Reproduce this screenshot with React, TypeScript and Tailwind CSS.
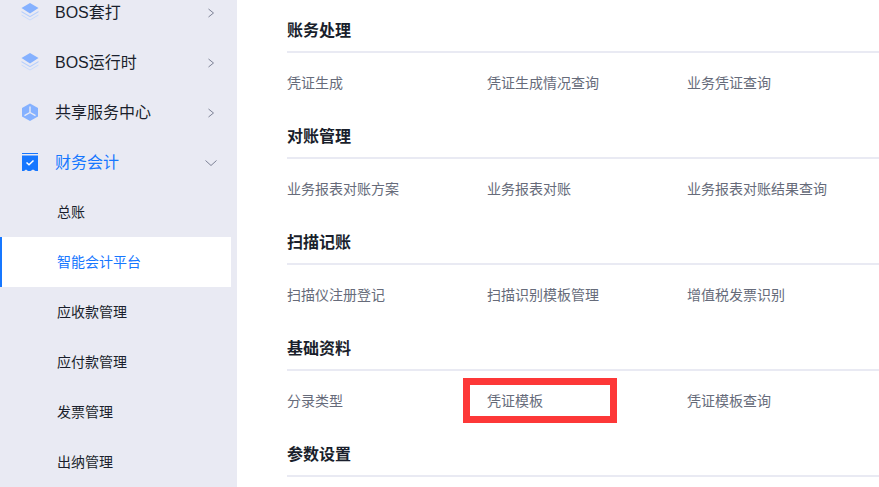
import React from 'react';

const sansStack = '"Liberation Sans", "Noto Sans CJK SC", sans-serif';

const LayersIcon = () => (
  <svg width="18" height="20" viewBox="0 0 18 20" className="shrink-0">
    <path d="M9 0 L17.5 5 L9 10.5 L0.5 5 Z" fill="#85b1ff" />
    <path d="M0.5 8 L9 13 L17.5 8 L17.5 9.2 L9 14.2 L0.5 9.2 Z" fill="#b5cffd" />
    <path d="M0.5 11.5 L9 16.5 L17.5 11.5 L17.5 12.5 L9 17.5 L0.5 12.5 Z" fill="#c8dbfc" />
  </svg>
);

const ShareIcon = () => (
  <svg width="18" height="20" viewBox="0 0 18 20" className="shrink-0">
    <path d="M9 0.5 L17 5 V13.5 L9 18 L1 13.5 V5 Z" fill="#85b1ff" />
    <path d="M9 3.5 V9.5 M9 9.5 L3.5 12.7 M9 9.5 L14.5 12.7" stroke="#e9eaf3" strokeWidth="1.4" fill="none" />
  </svg>
);

const LedgerIcon = () => (
  <svg width="18" height="20" viewBox="0 0 18 20" className="shrink-0">
    <rect x="1" y="0" width="16" height="1" fill="#1677ff" />
    <path d="M1 2.5 H17 V18 L14.5 18 L12 16.5 L9.5 18 L7 18 L5 16.5 L3 18 H1 Z" fill="#1677ff" />
    <path d="M5.5 9.5 L8 11.8 L12.5 7.5" stroke="#ffffff" strokeWidth="1.5" fill="none" />
  </svg>
);

const Chevron = ({ open }: { open?: boolean }) => (
  <svg width="12" height="12" viewBox="0 0 12 12" className="shrink-0">
    <path
      d={open ? 'M0.5 3.5 L6 8.5 L11.5 3.5' : 'M3.5 2 L8.5 6 L3.5 10'}
      stroke="#7d8296"
      strokeWidth="1"
      fill="none"
    />
  </svg>
);

const topMenus = [
  { label: 'BOS套打', icon: <LayersIcon /> },
  { label: 'BOS运行时', icon: <LayersIcon /> },
  { label: '共享服务中心', icon: <ShareIcon /> },
];

const subMenus = ['总账', '智能会计平台', '应收款管理', '应付款管理', '发票管理', '出纳管理'];

const sections = [
  { title: '账务处理', links: ['凭证生成', '凭证生成情况查询', '业务凭证查询'] },
  { title: '对账管理', links: ['业务报表对账方案', '业务报表对账', '业务报表对账结果查询'] },
  { title: '扫描记账', links: ['扫描仪注册登记', '扫描识别模板管理', '增值税发票识别'] },
  { title: '基础资料', links: ['分录类型', '凭证模板', '凭证模板查询'] },
  { title: '参数设置', links: [] as string[] },
];

export default function App() {
  return (
    <div
      className="relative flex h-[487px] w-[879px] overflow-hidden bg-white"
      style={{ fontFamily: sansStack }}
    >
      {/* Sidebar */}
      <aside className="h-full w-[237px] shrink-0 bg-[#e9eaf3]">
        <div className="-mt-[13px]">
          {topMenus.map((menu) => (
            <div key={menu.label} className="flex h-[50px] items-center pl-[21px] pr-[20px] pt-[2px]">
              {menu.icon}
              <span className="ml-[16px] flex-1 text-[16px] text-[#1a1f2c]">{menu.label}</span>
              <Chevron />
            </div>
          ))}
          <div className="flex h-[50px] items-center pl-[21px] pr-[20px] pt-[2px]">
            <LedgerIcon />
            <span className="ml-[16px] flex-1 text-[16px] text-[#1677ff]">财务会计</span>
            <Chevron open />
          </div>
          {subMenus.map((item) => {
            const active = item === '智能会计平台';
            return (
              <div
                key={item}
                className={
                  active
                    ? 'flex h-[50px] w-[231px] items-center border-l-2 border-[#1677ff] bg-white pl-[55px] text-[14px] text-[#1677ff]'
                    : 'flex h-[50px] items-center pl-[57px] text-[14px] text-[#1a1f2c]'
                }
              >
                {item}
              </div>
            );
          })}
        </div>
      </aside>

      {/* Main content */}
      <main className="flex-1 pl-[50px] pt-[4px]">
        {sections.map((section) => (
          <section key={section.title} className="h-[106px]">
            <h2 className="flex h-[47px] items-center pt-[6px] text-[16px] font-bold text-[#1a1f2c]">
              {section.title}
            </h2>
            <div className="h-[2px] bg-[#e9eaf3]" />
            <div className="flex h-[57px] items-center pt-[4px]">
              {section.links.map((link) => (
                <div key={link} className="w-[200px] shrink-0 text-[14px] text-[#666b7a]">
                  {link}
                </div>
              ))}
            </div>
          </section>
        ))}
      </main>

      {/* Red highlight over the screenshot */}
      <div className="absolute left-[463px] top-[378px] h-[45px] w-[154px] border-[7px] border-[#fd3838]" />
    </div>
  );
}
